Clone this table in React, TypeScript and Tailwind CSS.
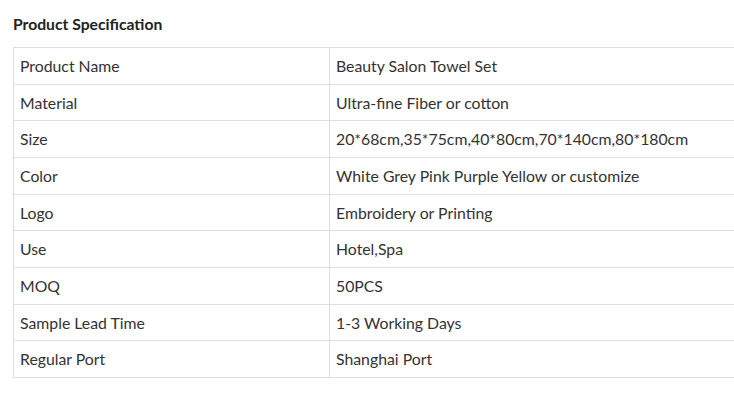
const rows: [string, string][] = [
  ["Product Name", "Beauty Salon Towel Set"],
  ["Material", "Ultra-fine Fiber or cotton"],
  ["Size", "20*68cm,35*75cm,40*80cm,70*140cm,80*180cm"],
  ["Color", "White Grey Pink Purple Yellow or customize"],
  ["Logo", "Embroidery or Printing"],
  ["Use", "Hotel,Spa"],
  ["MOQ", "50PCS"],
  ["Sample Lead Time", "1-3 Working Days"],
  ["Regular Port", "Shanghai Port"],
];

export default function App() {
  return (
    <div
      className="w-[734px] h-[405px] overflow-hidden bg-white text-[#333]"
      style={{ fontFamily: "Lato, 'Open Sans', sans-serif" }}
    >
      <div className="pl-[13px] pt-[14px]">
        <h2 className="text-[15.7px] font-bold leading-[20px] text-[#222]">
          Product Specification
        </h2>
        <table className="mt-[13px] w-[760px] border-collapse text-[15.8px] text-[#333]">
          <tbody>
            {rows.map(([k, v]) => (
              <tr key={k}>
                <td className="w-[316px] border border-[#ddd] px-[6px] py-2 leading-[19.67px]">
                  {k}
                </td>
                <td className="border border-[#ddd] px-[6px] py-2 leading-[19.67px]">
                  {v}
                </td>
              </tr>
            ))}
          </tbody>
        </table>
      </div>
    </div>
  );
}
